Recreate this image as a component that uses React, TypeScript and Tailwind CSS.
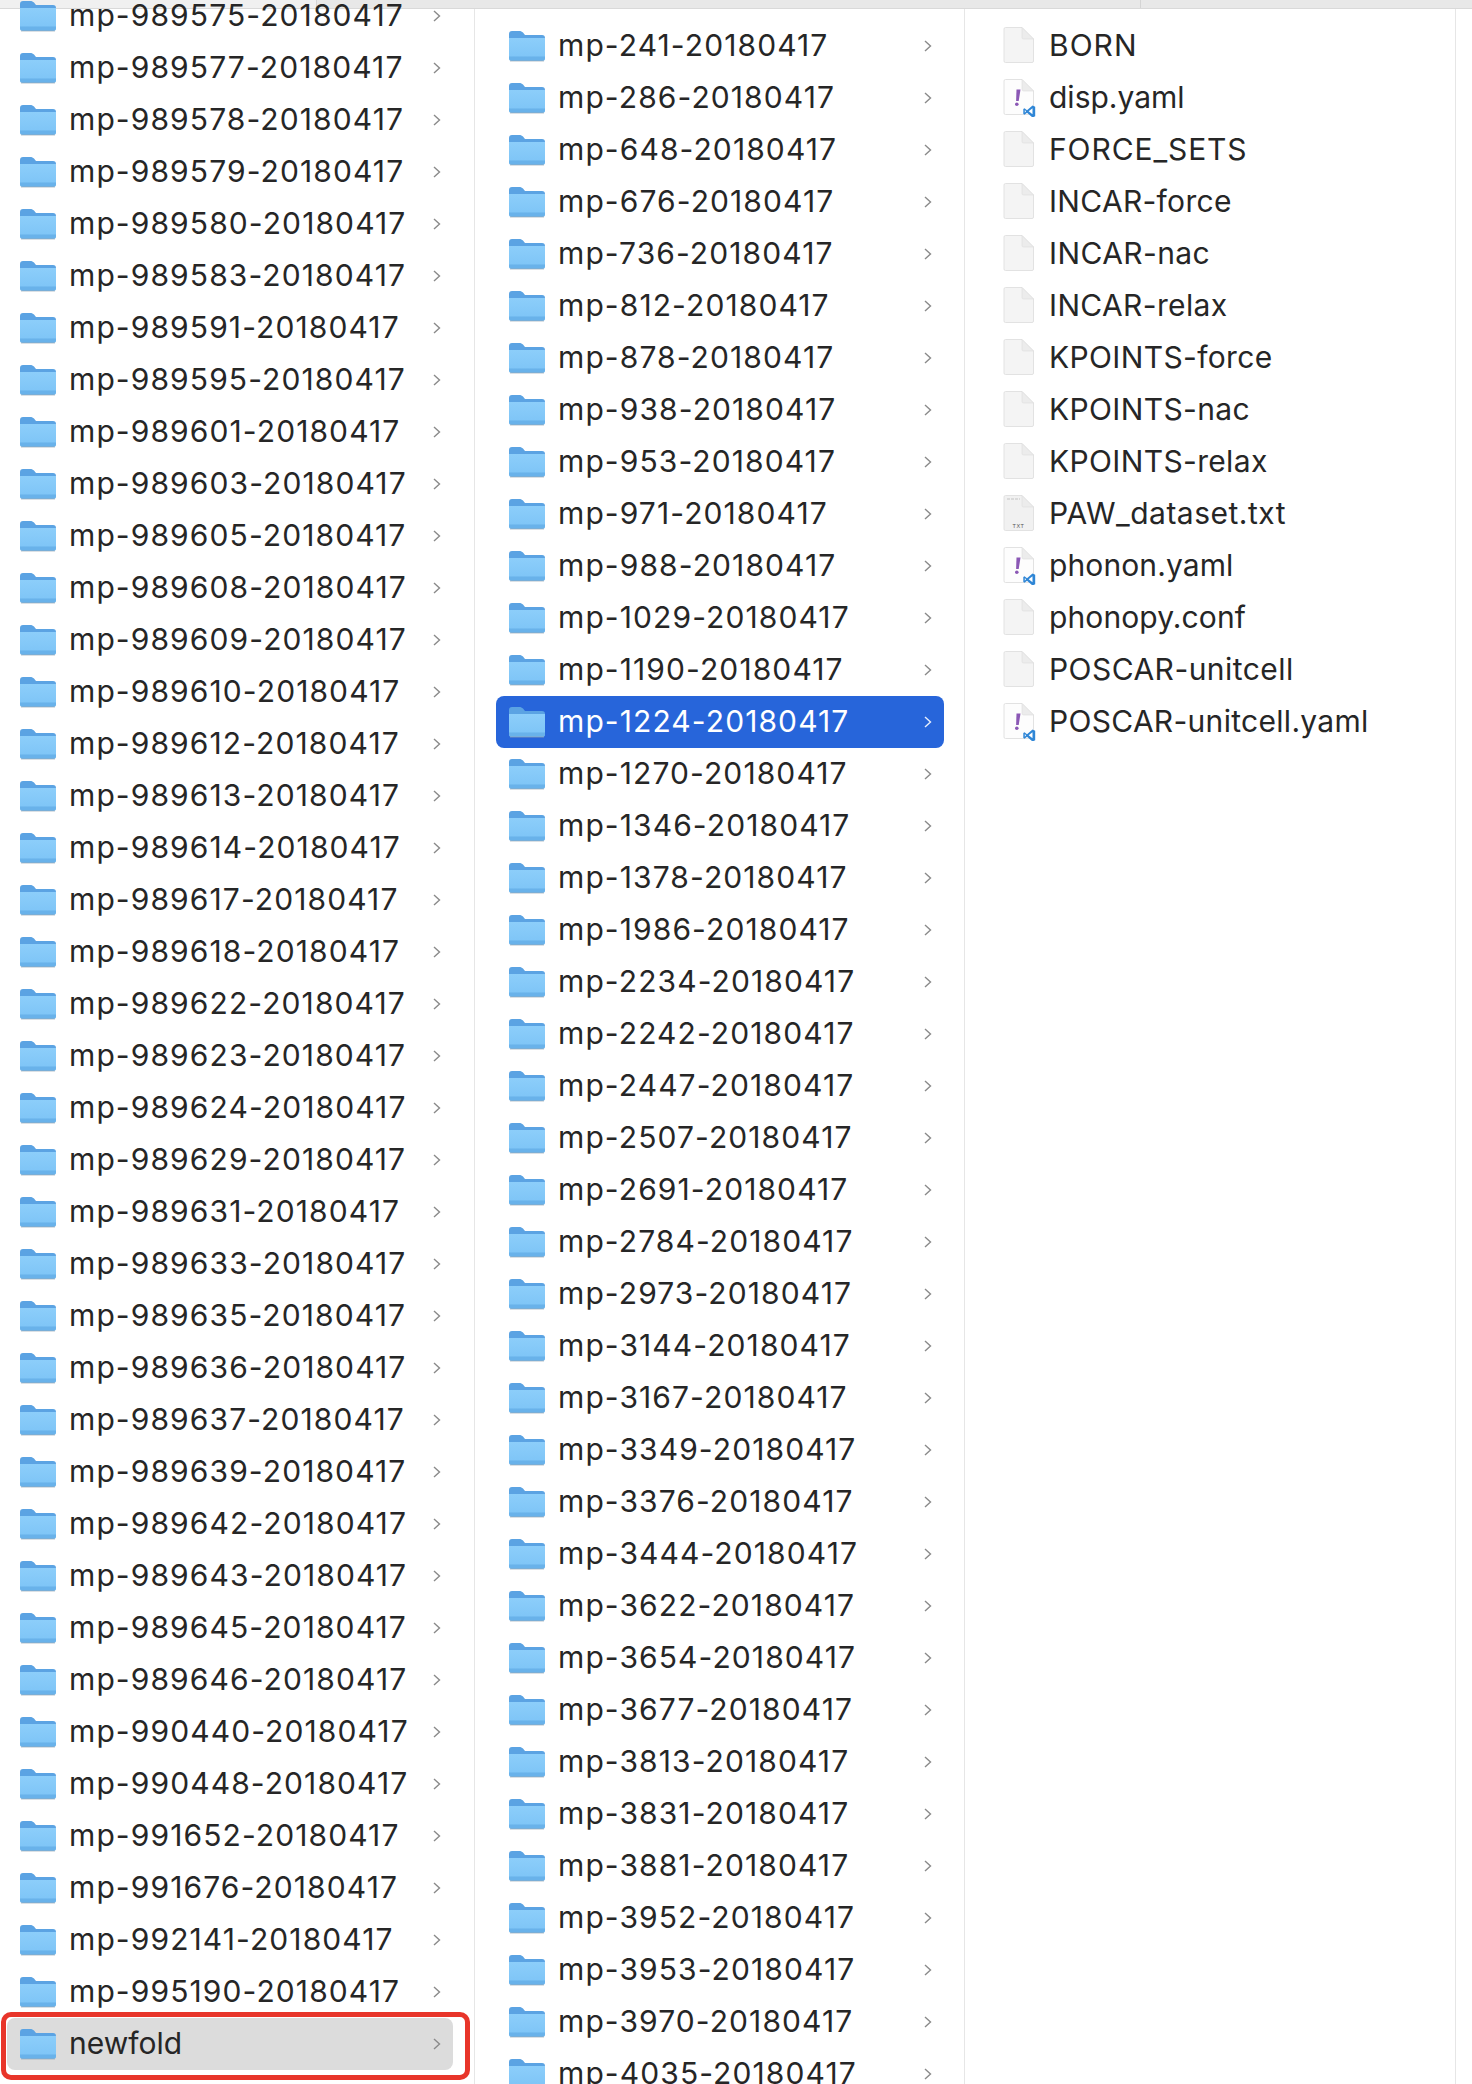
import { useId } from "react";

const col1 = [
  "mp-989575-20180417", "mp-989577-20180417", "mp-989578-20180417", "mp-989579-20180417", "mp-989580-20180417",
  "mp-989583-20180417", "mp-989591-20180417", "mp-989595-20180417", "mp-989601-20180417", "mp-989603-20180417",
  "mp-989605-20180417", "mp-989608-20180417", "mp-989609-20180417", "mp-989610-20180417", "mp-989612-20180417",
  "mp-989613-20180417", "mp-989614-20180417", "mp-989617-20180417", "mp-989618-20180417", "mp-989622-20180417",
  "mp-989623-20180417", "mp-989624-20180417", "mp-989629-20180417", "mp-989631-20180417", "mp-989633-20180417",
  "mp-989635-20180417", "mp-989636-20180417", "mp-989637-20180417", "mp-989639-20180417", "mp-989642-20180417",
  "mp-989643-20180417", "mp-989645-20180417", "mp-989646-20180417", "mp-990440-20180417", "mp-990448-20180417",
  "mp-991652-20180417", "mp-991676-20180417", "mp-992141-20180417", "mp-995190-20180417",
];

const col2 = [
  241, 286, 648, 676, 736, 812, 878, 938, 953, 971, 988, 1029, 1190, 1224, 1270, 1346, 1378, 1986, 2234, 2242, 2447,
  2507, 2691, 2784, 2973, 3144, 3167, 3349, 3376, 3444, 3622, 3654, 3677, 3813, 3831, 3881, 3952, 3953, 3970, 4035,
].map((n) => `mp-${n}-20180417`);

const files: { name: string; kind: "blank" | "yaml" | "txt"; track: string }[] = [
  { name: "BORN", kind: "blank", track: "tracking-[1px]" },
  { name: "disp.yaml", kind: "yaml", track: "tracking-[0px]" },
  { name: "FORCE_SETS", kind: "blank", track: "tracking-[0.9px]" },
  { name: "INCAR-force", kind: "blank", track: "tracking-[0.3px]" },
  { name: "INCAR-nac", kind: "blank", track: "tracking-[0.4px]" },
  { name: "INCAR-relax", kind: "blank", track: "tracking-[0.35px]" },
  { name: "KPOINTS-force", kind: "blank", track: "tracking-[0.35px]" },
  { name: "KPOINTS-nac", kind: "blank", track: "tracking-[0.35px]" },
  { name: "KPOINTS-relax", kind: "blank", track: "tracking-[0.35px]" },
  { name: "PAW_dataset.txt", kind: "txt", track: "tracking-[0.5px]" },
  { name: "phonon.yaml", kind: "yaml", track: "tracking-[0.1px]" },
  { name: "phonopy.conf", kind: "blank", track: "tracking-[0.1px]" },
  { name: "POSCAR-unitcell", kind: "blank", track: "tracking-[0.45px]" },
  { name: "POSCAR-unitcell.yaml", kind: "yaml", track: "tracking-[0.3px]" },
];

function FolderIcon() {
  const id = useId();
  return (
    <svg width="36" height="32" viewBox="0 0 36 32" className="shrink-0">
      <defs>
        <linearGradient id={id} x1="0" y1="0" x2="0" y2="1">
          <stop offset="0" stopColor="#8ccefa" />
          <stop offset="1" stopColor="#7cc3f6" />
        </linearGradient>
      </defs>
      <path d="M0 4a3 3 0 0 1 3-3h7c2 0 3 .6 4 1.600L16 5h17a3 3 0 0 1 3 3v6H0z" fill="#5ba3e3" />
      <path d="M0 8h36v20a3 3 0 0 1-3 3H3a3 3 0 0 1-3-3z" fill={`url(#${id})`} />
      <path d="M0 26.500h36V28a3 3 0 0 1-3 3H3a3 3 0 0 1-3-3z" fill="#69b2ea" />
      <path d="M1 31h34" stroke="#9aa8b4" strokeWidth="1" opacity="0.7" />
    </svg>
  );
}

function Chevron({ active }: { active?: boolean }) {
  return (
    <svg width="8" height="12" viewBox="0 0 8 12" className="shrink-0">
      <path d="M1 1l5.500 5L1 11" fill="none" stroke={active ? "#e8effc" : "#8a8a8a"} strokeWidth="1.400" />
    </svg>
  );
}

function FileIcon({ kind }: { kind: "blank" | "yaml" | "txt" }) {
  const body = kind === "yaml" ? "#fdfdfd" : kind === "txt" ? "#f1f1f1" : "#f4f4f4";
  return (
    <svg width="36" height="38" viewBox="0 0 36 38" className="shrink-0">
      <path
        d="M1 2a1.500 1.500 0 0 1 1.500-1.500H19L30.500 12v22a1.500 1.500 0 0 1-1.500 1.500H2.500A1.500 1.500 0 0 1 1 34z"
        fill={body}
        stroke="#e2e2e2"
        strokeWidth="1"
      />
      <path d="M19 .5V10.500a1.500 1.500 0 0 0 1.500 1.500H30.500z" fill="#ececec" stroke="#dedede" strokeWidth="0.6" />
      {kind === "txt" && (
        <>
          <path d="M4 4h13" stroke="#c4c4c4" strokeWidth="1.200" strokeDasharray="3 1" />
          <text x="15.500" y="33" textAnchor="middle" fontSize="5.500" fontFamily="Liberation Sans, sans-serif" fill="#555" letterSpacing="0.5">
            TXT
          </text>
        </>
      )}
      {kind === "yaml" && (
        <>
          <path d="M13.500 10.500l4 0-1.800 11.500-2.600 0z" fill="#8b58b5" />
          <circle cx="13.800" cy="25.200" r="1.800" fill="#8b58b5" />
          <path d="M29.500 26.500L24 31.200l-2.500-2-1.200.8v5l1.200.8 2.500-2 5.500 4.700 2.700-1.200V27.700z" fill="#2f86d6" />
          <path d="M29.500 29.300l-3.800 3 3.800 3z" fill="#fff" />
          <path d="M21.800 30.900l1.300 1.400-1.300 1.400z" fill="#fff" />
        </>
      )}
    </svg>
  );
}

function FolderRow({ name, selected, soft }: { name: string; selected?: boolean; soft?: boolean }) {
  const bg = selected ? "bg-[#2765da] text-white" : soft ? "bg-[#dcdcdc] text-[#262626]" : "text-[#262626]";
  return (
    <div className={`h-[52px] flex items-center pl-[13px] pr-[12px] rounded-[8px] ${bg}`}>
      <FolderIcon />
      <span className={`ml-[13px] flex-1 whitespace-nowrap pb-[2px] ${soft ? "" : "tracking-[1.1px]"}`}>{name}</span>
      <Chevron active={selected} />
    </div>
  );
}

export default function App() {
  return (
    <div className="h-[2084px] w-[1472px] overflow-hidden bg-white flex flex-col font-['Inter',sans-serif] text-[30px]">
      <div className="h-[9px] shrink-0 flex bg-[#e8e8e8] border-b border-[#d9d9d9]">
        <div className="w-[317px] bg-[#f0f0f0] border-r border-[#d4d4d4]" />
        <div className="w-[824px] border-r border-[#d4d4d4]" />
      </div>
      <div className="flex flex-1 min-h-0">
        <div className="w-[475px] shrink-0 border-r border-[#e6e6e6] pl-[7px] pr-[21px]">
          <div className="-mt-[19px]">
            {col1.map((n) => (
              <FolderRow key={n} name={n} />
            ))}
            <div className="relative">
              <FolderRow name="newfold" soft />
              <div className="absolute -left-[6px] -right-[17px] -top-[6px] h-[68px] rounded-[10px] border-[5px] border-[#e8352a]" />
            </div>
          </div>
        </div>
        <div className="w-[490px] shrink-0 border-r border-[#e6e6e6] pl-[21px] pr-[20px] pt-[11px]">
          {col2.map((n) => (
            <FolderRow key={n} name={n} selected={n === "mp-1224-20180417"} />
          ))}
        </div>
        <div className="w-[491px] shrink-0 border-r border-[#e6e6e6] pl-[38px] pt-[11px] text-[#262626]">
          {files.map((f) => (
            <div key={f.name} className="h-[52px] flex items-center">
              <FileIcon kind={f.kind} />
              <span className={`ml-[10px] whitespace-nowrap pb-[2px] ${f.track}`}>{f.name}</span>
            </div>
          ))}
        </div>
      </div>
    </div>
  );
}
